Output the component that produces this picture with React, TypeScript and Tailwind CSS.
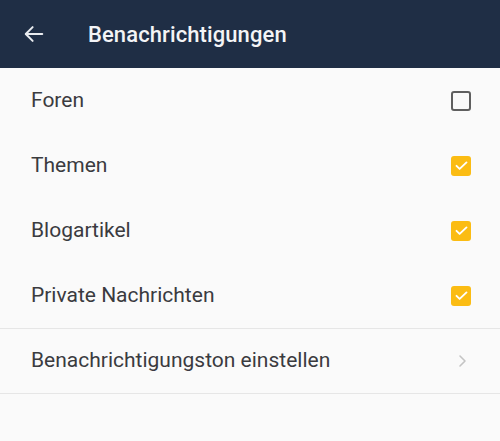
import { useState } from "react";

type Item = {
    label: string
    checked: boolean
}

const initialItems: Item[] = [
    { label: "Foren", checked: false },
    { label: "Themen", checked: true },
    { label: "Blogartikel", checked: true },
    { label: "Private Nachrichten", checked: true },
]

const Checkbox = ({ checked }: { checked: boolean }) => {
    if (!checked) {
        return <div className="w-[20px] h-[20px] rounded-[3px] border-2 border-[#5f5f5f]" />
    }
    return (
        <div className="w-[20px] h-[20px] rounded-[3px] bg-[#fbbc13] flex items-center justify-center">
            <svg width="15" height="15" viewBox="0 0 24 24" fill="none" stroke="white" strokeWidth="3" strokeLinecap="round" strokeLinejoin="round">
                <path d="M4 12.5l5 5L20 7" />
            </svg>
        </div>
    )
}

export default function App() {
    const [items, setItems] = useState(initialItems)

    const toggle = (i: number) => {
        setItems(items.map((it, idx) => idx === i ? { ...it, checked: !it.checked } : it))
    }

    return (
        <div className="w-[500px] h-[441px] bg-[#fafafa] overflow-hidden" style={{ fontFamily: 'Roboto, "Noto Sans", sans-serif' }}>
            <header className="h-[68px] bg-[#1f2e45] flex items-center text-white">
                <div className="w-[88px] pl-[23px] flex items-center">
                    <svg width="22" height="22" viewBox="0 0 24 24" fill="none" stroke="#e8ebef" strokeWidth="2.2" strokeLinecap="round" strokeLinejoin="round">
                        <path d="M21 12H3.5" />
                        <path d="M10.5 4.5L3 12l7.5 7.5" />
                    </svg>
                </div>
                <h1 className="text-[22px] font-medium tracking-[0.1px] text-[#f3f4f6]">Benachrichtigungen</h1>
            </header>

            {items.map((item, i) => (
                <div
                    key={item.label}
                    className="h-[65px] flex items-center justify-between pl-[31px] pr-[29px] cursor-pointer"
                    onClick={() => toggle(i)}
                >
                    <span className="text-[21px] text-[#3a3b3f]">{item.label}</span>
                    <Checkbox checked={item.checked} />
                </div>
            ))}

            <div className="border-t border-b border-[#e6e6e6] h-[66px] flex items-center justify-between pl-[31px] pr-[33px]">
                <span className="text-[21px] text-[#3a3b3f]">Benachrichtigungston einstellen</span>
                <svg width="10" height="14" viewBox="0 0 10 14" fill="none" stroke="#c4c4c4" strokeWidth="1.6" strokeLinecap="round" strokeLinejoin="round">
                    <path d="M3 2l5 5-5 5" />
                </svg>
            </div>
        </div>
    )
}
